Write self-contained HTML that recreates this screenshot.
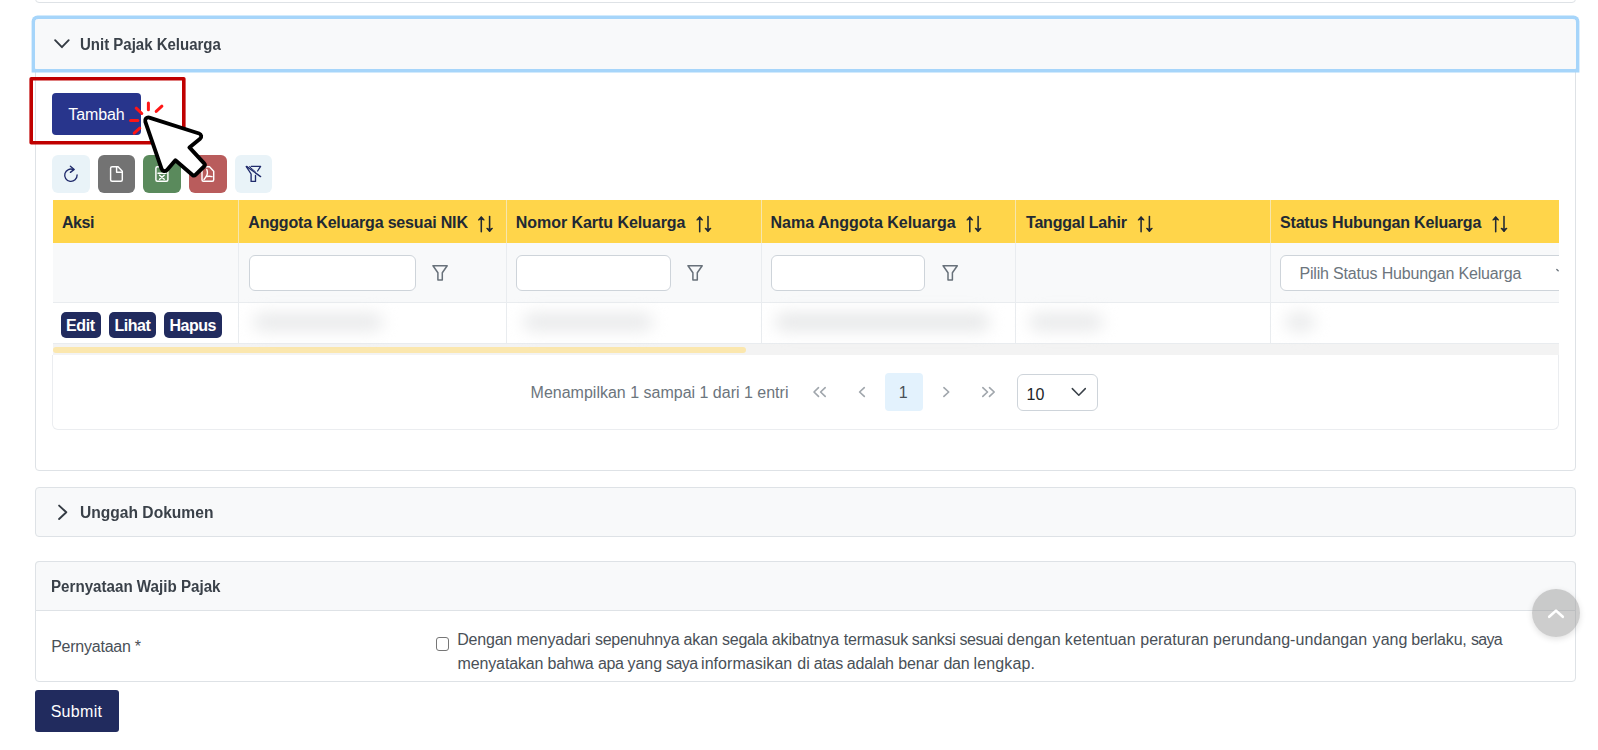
<!DOCTYPE html>
<html lang="id"><head><meta charset="utf-8"><title>Unit Pajak Keluarga</title>
<style>
html,body{margin:0;padding:0;background:#fff;}
body{position:relative;width:1598px;height:750px;overflow:hidden;font-family:"Liberation Sans",sans-serif;}
.b{position:absolute;box-sizing:border-box;}
.t{position:absolute;white-space:nowrap;line-height:normal;font-family:"Liberation Sans",sans-serif;}
svg{position:absolute;overflow:visible;}
.panelhd{background:#f8f9fa;border:1px solid #dee2e6;}
.inp{background:#fff;border:1px solid #ced4da;border-radius:6px;}
.vl{position:absolute;width:1px;}

</style></head>
<body>
<!-- previous panel bottom edge -->
<div class="b" style="left:35px;top:-30px;width:1541px;height:33px;border:1px solid #dee2e6;border-radius:0 0 4px 4px;background:#fff"></div>

<!-- Unit Pajak Keluarga content -->
<div class="b" style="left:35px;top:60px;width:1541px;height:411px;border:1px solid #dee2e6;border-radius:0 0 4px 4px;background:#fff"></div>
<!-- Unit Pajak Keluarga header w/ focus ring -->
<div class="b panelhd" style="left:35px;top:19px;width:1541px;height:50px;border-color:#f8f9fa;border-radius:2.5px 2.5px 0 0;box-shadow:0 0 0 3.4px #a6d5fa"></div>
<svg style="left:54px;top:39px" width="16" height="10" viewBox="0 0 16 10"><path d="M1.1 1.2 L7.9 8.2 L14.7 1.2" fill="none" stroke="#343b43" stroke-width="1.9" stroke-linecap="round" stroke-linejoin="round"/></svg>

<!-- Tambah button -->
<div class="b" style="left:52px;top:93px;width:89px;height:42px;background:#28358c;border-radius:4px"></div>

<!-- toolbar icon buttons -->
<div class="b" style="left:52px;top:155px;width:37.7px;height:37.7px;background:#e9f3f8;border-radius:6px"></div>
<div class="b" style="left:97.7px;top:155px;width:37.7px;height:37.7px;background:#737373;border-radius:6px"></div>
<div class="b" style="left:143.4px;top:155px;width:37.7px;height:37.7px;background:#5a8a5c;border-radius:6px"></div>
<div class="b" style="left:189.1px;top:155px;width:37.7px;height:37.7px;background:#b95c5c;border-radius:6px"></div>
<div class="b" style="left:234.8px;top:155px;width:37.7px;height:37.7px;background:#e9f3f8;border-radius:6px"></div>

<!-- table -->
<div class="b" id="tbl" style="left:53px;top:200px;width:1506px;height:155px;overflow:hidden">
  <div class="b" style="left:0;top:0;width:1506px;height:43px;background:#ffd54a"></div>
  <div class="b" style="left:0;top:43px;width:1506px;height:60px;background:#f8f9fa;border-bottom:1px solid #e9ecef"></div>
  <div class="b" style="left:0;top:103px;width:1506px;height:41px;background:#fff;border-bottom:1px solid #e9ecef"></div>
  <div class="b" style="left:0;top:144.4px;width:1506px;height:10.3px;background:#f3f3f3"></div>
  <div class="b" style="left:0;top:147px;width:693px;height:6px;background:#fbe7ae;border-radius:3px"></div>
  <!-- column dividers -->
  <div class="vl" style="left:185px;top:0;height:43px;background:#f6e6ad"></div>
  <div class="vl" style="left:453px;top:0;height:43px;background:#f6e6ad"></div>
  <div class="vl" style="left:707.6px;top:0;height:43px;background:#f6e6ad"></div>
  <div class="vl" style="left:962.4px;top:0;height:43px;background:#f6e6ad"></div>
  <div class="vl" style="left:1217px;top:0;height:43px;background:#f6e6ad"></div>
  <div class="vl" style="left:185px;top:43px;height:101px;background:#e9ecef"></div>
  <div class="vl" style="left:453px;top:43px;height:101px;background:#e9ecef"></div>
  <div class="vl" style="left:707.6px;top:43px;height:101px;background:#e9ecef"></div>
  <div class="vl" style="left:962.4px;top:43px;height:101px;background:#e9ecef"></div>
  <div class="vl" style="left:1217px;top:43px;height:101px;background:#e9ecef"></div>
  <!-- filter inputs -->
  <div class="b inp" style="left:196.3px;top:55.2px;width:167.2px;height:35.6px"></div>
  <div class="b inp" style="left:463.3px;top:55.2px;width:154.4px;height:35.6px"></div>
  <div class="b inp" style="left:717.6px;top:55.2px;width:154.6px;height:35.6px"></div>
  <div class="b inp" style="left:1227.2px;top:55.2px;width:300px;height:35.6px"></div>
  <!-- action buttons -->
  <div class="b" style="left:8px;top:112.1px;width:39.7px;height:25.7px;background:#212b5e;border-radius:5px"></div>
  <div class="b" style="left:56px;top:112.1px;width:46.7px;height:25.7px;background:#212b5e;border-radius:5px"></div>
  <div class="b" style="left:110.75px;top:112.1px;width:58.2px;height:25.7px;background:#212b5e;border-radius:5px"></div>
  <!-- blurred data -->
  <div class="b" style="left:200px;top:113px;width:130px;height:18px;background:#e9eaeb;border-radius:9px;filter:blur(8px)"></div>
  <div class="b" style="left:470px;top:113px;width:130px;height:18px;background:#e9eaeb;border-radius:9px;filter:blur(8px)"></div>
  <div class="b" style="left:722px;top:113px;width:215px;height:18px;background:#e7e8e9;border-radius:9px;filter:blur(8px)"></div>
  <div class="b" style="left:976px;top:113px;width:74px;height:18px;background:#e9eaeb;border-radius:9px;filter:blur(8px)"></div>
  <div class="b" style="left:1232px;top:113px;width:30px;height:18px;background:#e9eaeb;border-radius:9px;filter:blur(8px)"></div>
</div>

<!-- paginator -->
<div class="b" style="left:52px;top:354.7px;width:1507px;height:75px;border:1px solid #ebedf0;border-top:none;border-radius:0 0 6px 6px;background:#fff"></div>
<div class="b" style="left:885.4px;top:373.2px;width:37.3px;height:37.6px;background:#e3f2fd;border-radius:4px"></div>
<div class="b inp" style="left:1017.3px;top:374px;width:80.6px;height:36.8px"></div>

<!-- Unggah Dokumen -->
<div class="b panelhd" style="left:35px;top:487.4px;width:1541px;height:49.5px;border-radius:4px"></div>

<!-- Pernyataan Wajib Pajak -->
<div class="b" style="left:35px;top:561.2px;width:1541px;height:120.4px;border:1px solid #dee2e6;border-radius:4px;background:#fff"></div>
<div class="b panelhd" style="left:35px;top:561.2px;width:1541px;height:49.6px;border-radius:4px 4px 0 0"></div>
<div class="b" style="left:435.5px;top:637.4px;width:13.2px;height:13.2px;border:1.3px solid #767676;border-radius:3px;background:#fff"></div>

<!-- Submit -->
<div class="b" style="left:35px;top:690px;width:84px;height:42px;background:#212b5e;border-radius:3px"></div>

<!-- scroll to top -->
<div class="b" style="left:1532px;top:589px;width:48px;height:48px;border-radius:50%;background:rgba(150,150,150,0.48);box-shadow:0 2px 6px rgba(0,0,0,0.12)"></div>
<svg style="left:1548px;top:608px" width="16" height="10" viewBox="0 0 16 10"><path d="M1.2 8.8 L8 2.6 L14.8 8.8" fill="none" stroke="#fff" stroke-width="2.6" stroke-linecap="round" stroke-linejoin="round"/></svg>

<!-- Unggah chevron -->
<svg style="left:57px;top:504px" width="12" height="17" viewBox="0 0 12 17"><path d="M2.1 1.6 L9.3 8.3 L2.1 15.0" fill="none" stroke="#343b43" stroke-width="1.9" stroke-linecap="round" stroke-linejoin="round"/></svg>

<!-- toolbar icons -->
<svg style="left:0;top:0" width="300" height="200" viewBox="0 0 300 200">
  <!-- refresh -->
  <g fill="none" stroke="#1f2a6b" stroke-width="1.35" stroke-linecap="round" stroke-linejoin="round">
    <path d="M73.6 169.6 A6.2 6.2 0 1 0 77.1 175"/>
    <path d="M70.4 166.3 L74.2 169.4 L70.4 172.4"/>
  </g>
  <!-- file -->
  <g fill="none" stroke="#ffffff" stroke-width="1.45" stroke-linecap="round" stroke-linejoin="round">
    <path d="M112.1 166.8 H118.1 L122.3 171.2 V179.8 Q122.3 181.3 120.8 181.3 H112.1 Q110.6 181.3 110.6 179.8 V168.3 Q110.6 166.8 112.1 166.8 Z"/>
    <path d="M116.6 167.2 V172.2 H122"/>
  </g>
  <!-- excel -->
  <g fill="none" stroke="#ffffff" stroke-width="1.45" stroke-linecap="round" stroke-linejoin="round">
    <path d="M157.4 166.8 H163.4 L167.9 171.2 V179.8 Q167.9 181.3 166.4 181.3 H157.4 Q155.9 181.3 155.9 179.8 V168.3 Q155.9 166.8 157.4 166.8 Z"/>
    <path d="M159.6 175.2 L164.2 179.2 M164.2 175.2 L159.6 179.2"/>
    <path d="M158 173.3 H166"/>
  </g>
  <!-- pdf -->
  <g fill="none" stroke="#ffffff" stroke-width="1.45" stroke-linecap="round" stroke-linejoin="round">
    <path d="M203.5 166.8 H209.5 L213.7 171.2 V179.8 Q213.7 181.3 212.2 181.3 H203.5 Q202 181.3 202 179.8 V168.3 Q202 166.8 203.5 166.8 Z"/>
    <path d="M206.8 169.5 Q208.3 173.5 206.2 176.4 Q205 178.3 204 179.5 M206.5 176.6 Q209 175.8 212 176.6"/>
  </g>
  <!-- filter slash -->
  <g fill="none" stroke="#1f2a6b" stroke-width="1.35" stroke-linecap="round" stroke-linejoin="round">
    <path d="M251.2 166.4 H260.6 L257.6 171"/>
    <path d="M255.5 175.4 V181.4 H251.1 V174 L246.3 166.6"/>
    <path d="M246.6 166.4 L260.6 176.6"/>
    <path d="M249.4 166.6 L255.4 171.8" stroke-width="1"/>
  </g>
</svg>

<!-- sort icons -->
<svg style="left:0;top:200px" width="1598" height="45" viewBox="0 200 1598 45">
  <g transform="translate(477.8,200)" fill="none" stroke="#212934" stroke-linecap="round" stroke-linejoin="round">
      <path d="M3.5 17.2 V31.7" stroke-width="1.55"/>
      <path d="M0.8 19.9 L3.5 16.9 L6.2 19.9 L3.5 18.7 Z" stroke-width="1.3" fill="#212934"/>
      <path d="M11.8 16.4 V31" stroke-width="1.55"/>
      <path d="M9.1 28.4 L11.8 31.4 L14.5 28.4 L11.8 29.6 Z" stroke-width="1.3" fill="#212934"/>
    </g>
  <g transform="translate(696.2,200)" fill="none" stroke="#212934" stroke-linecap="round" stroke-linejoin="round">
      <path d="M3.5 17.2 V31.7" stroke-width="1.55"/>
      <path d="M0.8 19.9 L3.5 16.9 L6.2 19.9 L3.5 18.7 Z" stroke-width="1.3" fill="#212934"/>
      <path d="M11.8 16.4 V31" stroke-width="1.55"/>
      <path d="M9.1 28.4 L11.8 31.4 L14.5 28.4 L11.8 29.6 Z" stroke-width="1.3" fill="#212934"/>
    </g>
  <g transform="translate(966.3,200)" fill="none" stroke="#212934" stroke-linecap="round" stroke-linejoin="round">
      <path d="M3.5 17.2 V31.7" stroke-width="1.55"/>
      <path d="M0.8 19.9 L3.5 16.9 L6.2 19.9 L3.5 18.7 Z" stroke-width="1.3" fill="#212934"/>
      <path d="M11.8 16.4 V31" stroke-width="1.55"/>
      <path d="M9.1 28.4 L11.8 31.4 L14.5 28.4 L11.8 29.6 Z" stroke-width="1.3" fill="#212934"/>
    </g>
  <g transform="translate(1137.6,200)" fill="none" stroke="#212934" stroke-linecap="round" stroke-linejoin="round">
      <path d="M3.5 17.2 V31.7" stroke-width="1.55"/>
      <path d="M0.8 19.9 L3.5 16.9 L6.2 19.9 L3.5 18.7 Z" stroke-width="1.3" fill="#212934"/>
      <path d="M11.8 16.4 V31" stroke-width="1.55"/>
      <path d="M9.1 28.4 L11.8 31.4 L14.5 28.4 L11.8 29.6 Z" stroke-width="1.3" fill="#212934"/>
    </g>
  <g transform="translate(1492.2,200)" fill="none" stroke="#212934" stroke-linecap="round" stroke-linejoin="round">
      <path d="M3.5 17.2 V31.7" stroke-width="1.55"/>
      <path d="M0.8 19.9 L3.5 16.9 L6.2 19.9 L3.5 18.7 Z" stroke-width="1.3" fill="#212934"/>
      <path d="M11.8 16.4 V31" stroke-width="1.55"/>
      <path d="M9.1 28.4 L11.8 31.4 L14.5 28.4 L11.8 29.6 Z" stroke-width="1.3" fill="#212934"/>
    </g>
</svg>

<!-- filter icons -->
<svg style="left:0;top:250px" width="1000" height="45" viewBox="0 250 1000 45">
  <path transform="translate(431.8,250)" d="M1.2 15.7 H15.4 L10.5 22.8 V30.1 H6.1 V22.8 Z" fill="none" stroke="#68717a" stroke-width="1.5" stroke-linejoin="round"/>
  <path transform="translate(686.8,250)" d="M1.2 15.7 H15.4 L10.5 22.8 V30.1 H6.1 V22.8 Z" fill="none" stroke="#68717a" stroke-width="1.5" stroke-linejoin="round"/>
  <path transform="translate(941.9,250)" d="M1.2 15.7 H15.4 L10.5 22.8 V30.1 H6.1 V22.8 Z" fill="none" stroke="#68717a" stroke-width="1.5" stroke-linejoin="round"/>
</svg>

<!-- paginator icons -->
<svg style="left:0;top:370px" width="1200" height="45" viewBox="0 370 1200 45">
  <g fill="none" stroke="#a0a6ac" stroke-width="1.65" stroke-linecap="round" stroke-linejoin="round">
    <path d="M818.5 387.7 L814 392 L818.5 396.4"/>
    <path d="M825.2 387.7 L820.6 392 L825.2 396.4"/>
    <path d="M864.3 387.7 L859.6 392 L864.3 396.4"/>
    <path d="M943.9 387.7 L948.7 392 L943.9 396.4"/>
    <path d="M982.8 387.7 L987.5 392 L982.8 396.4"/>
    <path d="M989.5 387.7 L994.2 392 L989.5 396.4"/>
  </g>
  <path d="M1072.3 388.6 L1078.8 395.2 L1085.3 388.6" fill="none" stroke="#3a4149" stroke-width="1.5" stroke-linecap="round" stroke-linejoin="round"/>
</svg>
<!-- dropdown chevron sliver at table clip -->
<svg style="left:1555px;top:266px" width="4" height="10" viewBox="0 0 4 10"><path d="M1.8 3.4 L3.2 4.8" fill="none" stroke="#6c757d" stroke-width="1.4" stroke-linecap="round"/></svg>

<div class="t" id="t_unit" style="left:80.17px;top:35.75px;font-size:16px;font-weight:700;color:#3a4149;letter-spacing:0.000px;transform:scaleX(0.9373);transform-origin:0 0">Unit Pajak Keluarga</div>
<div class="t" id="t_tambah" style="left:68.31px;top:105.95px;font-size:16px;font-weight:400;color:#ffffff;letter-spacing:-0.094px">Tambah</div>
<div class="t" id="t_aksi" style="left:62.02px;top:213.90px;font-size:16px;font-weight:700;color:#212934;letter-spacing:-0.459px">Aksi</div>
<div class="t" id="t_h1" style="left:248.27px;top:213.90px;font-size:16px;font-weight:700;color:#212934;letter-spacing:-0.168px">Anggota Keluarga sesuai NIK</div>
<div class="t" id="t_h2" style="left:515.85px;top:213.90px;font-size:16px;font-weight:700;color:#212934;letter-spacing:-0.057px">Nomor Kartu Keluarga</div>
<div class="t" id="t_h3" style="left:770.55px;top:213.90px;font-size:16px;font-weight:700;color:#212934;letter-spacing:-0.007px">Nama Anggota Keluarga</div>
<div class="t" id="t_h4" style="left:1026.12px;top:213.90px;font-size:16px;font-weight:700;color:#212934;letter-spacing:-0.237px">Tanggal Lahir</div>
<div class="t" id="t_h5" style="left:1279.99px;top:213.90px;font-size:16px;font-weight:700;color:#212934;letter-spacing:-0.175px">Status Hubungan Keluarga</div>
<div class="t" id="t_ph" style="left:1299.40px;top:264.80px;font-size:16px;font-weight:400;color:#6c757d;letter-spacing:-0.170px">Pilih Status Hubungan Keluarga</div>
<div class="t" id="t_edit" style="left:66.11px;top:317.00px;font-size:16px;font-weight:700;color:#ffffff;letter-spacing:-0.408px">Edit</div>
<div class="t" id="t_lihat" style="left:114.55px;top:317.00px;font-size:16px;font-weight:700;color:#ffffff;letter-spacing:-0.513px">Lihat</div>
<div class="t" id="t_hapus" style="left:169.55px;top:317.00px;font-size:16px;font-weight:700;color:#ffffff;letter-spacing:-0.510px">Hapus</div>
<div class="t" id="t_show" style="left:530.60px;top:383.90px;font-size:16px;font-weight:400;color:#6c757d;letter-spacing:-0.002px">Menampilkan 1 sampai 1 dari 1 entri</div>
<div class="t" id="t_p1" style="left:898.68px;top:383.90px;font-size:16px;font-weight:400;color:#495057;letter-spacing:0.000px">1</div>
<div class="t" id="t_p10" style="left:1026.50px;top:385.60px;font-size:16px;font-weight:400;color:#212529;letter-spacing:0.000px">10</div>
<div class="t" id="t_unggah" style="left:80.16px;top:503.90px;font-size:16px;font-weight:700;color:#3a4149;letter-spacing:0.000px;transform:scaleX(0.9747);transform-origin:0 0">Unggah Dokumen</div>
<div class="t" id="t_pwp" style="left:51.22px;top:577.90px;font-size:16px;font-weight:700;color:#3a4149;letter-spacing:0.000px;transform:scaleX(0.9466);transform-origin:0 0">Pernyataan Wajib Pajak</div>
<div class="t" id="t_pern" style="left:51.13px;top:637.90px;font-size:16px;font-weight:400;color:#495057;letter-spacing:-0.234px">Pernyataan *</div>
<div class="t" id="t_submit" style="left:50.65px;top:702.60px;font-size:16px;font-weight:400;color:#ffffff;letter-spacing:0.305px">Submit</div>
<div class="t" id="t_l1_0" style="left:457.28px;top:630.80px;font-size:16px;font-weight:400;color:#495057;letter-spacing:-0.214px">Dengan</div>
<div class="t" id="t_l1_1" style="left:516.55px;top:630.80px;font-size:16px;font-weight:400;color:#495057;letter-spacing:-0.075px">menyadari</div>
<div class="t" id="t_l1_2" style="left:595.08px;top:630.80px;font-size:16px;font-weight:400;color:#495057;letter-spacing:-0.303px">sepenuhnya</div>
<div class="t" id="t_l1_3" style="left:683.56px;top:630.80px;font-size:16px;font-weight:400;color:#495057;letter-spacing:-0.090px">akan</div>
<div class="t" id="t_l1_4" style="left:722.08px;top:630.80px;font-size:16px;font-weight:400;color:#495057;letter-spacing:-0.286px">segala</div>
<div class="t" id="t_l1_5" style="left:771.87px;top:630.80px;font-size:16px;font-weight:400;color:#495057;letter-spacing:-0.165px">akibatnya</div>
<div class="t" id="t_l1_6" style="left:843.65px;top:630.80px;font-size:16px;font-weight:400;color:#495057;letter-spacing:-0.172px">termasuk</div>
<div class="t" id="t_l1_7" style="left:911.87px;top:630.80px;font-size:16px;font-weight:400;color:#495057;letter-spacing:-0.287px">sanksi</div>
<div class="t" id="t_l1_8" style="left:959.54px;top:630.80px;font-size:16px;font-weight:400;color:#495057;letter-spacing:-0.485px">sesuai</div>
<div class="t" id="t_l1_9" style="left:1007.07px;top:630.80px;font-size:16px;font-weight:400;color:#495057;letter-spacing:0.037px">dengan</div>
<div class="t" id="t_l1_10" style="left:1064.85px;top:630.80px;font-size:16px;font-weight:400;color:#495057;letter-spacing:0.077px">ketentuan</div>
<div class="t" id="t_l1_11" style="left:1140.24px;top:630.80px;font-size:16px;font-weight:400;color:#495057;letter-spacing:-0.005px">peraturan</div>
<div class="t" id="t_l1_12" style="left:1212.98px;top:630.80px;font-size:16px;font-weight:400;color:#495057;letter-spacing:0.070px">perundang-undangan</div>
<div class="t" id="t_l1_13" style="left:1372.62px;top:630.80px;font-size:16px;font-weight:400;color:#495057;letter-spacing:0.050px">yang</div>
<div class="t" id="t_l1_14" style="left:1411.20px;top:630.80px;font-size:16px;font-weight:400;color:#495057;letter-spacing:-0.186px">berlaku,</div>
<div class="t" id="t_l1_15" style="left:1471.10px;top:630.80px;font-size:16px;font-weight:400;color:#495057;letter-spacing:-0.772px">saya</div>
<div class="t" id="t_l2_0" style="left:457.55px;top:654.50px;font-size:16px;font-weight:400;color:#495057;letter-spacing:-0.138px">menyatakan</div>
<div class="t" id="t_l2_1" style="left:547.56px;top:654.50px;font-size:16px;font-weight:400;color:#495057;letter-spacing:-0.267px">bahwa</div>
<div class="t" id="t_l2_2" style="left:598.02px;top:654.50px;font-size:16px;font-weight:400;color:#495057;letter-spacing:-0.463px">apa</div>
<div class="t" id="t_l2_3" style="left:627.62px;top:654.50px;font-size:16px;font-weight:400;color:#495057;letter-spacing:-0.090px">yang</div>
<div class="t" id="t_l2_4" style="left:665.95px;top:654.50px;font-size:16px;font-weight:400;color:#495057;letter-spacing:-0.529px">saya</div>
<div class="t" id="t_l2_5" style="left:701.09px;top:654.50px;font-size:16px;font-weight:400;color:#495057;letter-spacing:0.042px">informasikan</div>
<div class="t" id="t_l2_6" style="left:797.36px;top:654.50px;font-size:16px;font-weight:400;color:#495057;letter-spacing:-0.100px">di</div>
<div class="t" id="t_l2_7" style="left:813.87px;top:654.50px;font-size:16px;font-weight:400;color:#495057;letter-spacing:-0.300px">atas</div>
<div class="t" id="t_l2_8" style="left:846.82px;top:654.50px;font-size:16px;font-weight:400;color:#495057;letter-spacing:-0.171px">adalah</div>
<div class="t" id="t_l2_9" style="left:898.16px;top:654.50px;font-size:16px;font-weight:400;color:#495057;letter-spacing:-0.045px">benar</div>
<div class="t" id="t_l2_10" style="left:943.40px;top:654.50px;font-size:16px;font-weight:400;color:#495057;letter-spacing:-0.188px">dan</div>
<div class="t" id="t_l2_11" style="left:973.55px;top:654.50px;font-size:16px;font-weight:400;color:#495057;letter-spacing:0.138px">lengkap.</div>
<!-- red highlight + cursor overlay -->
<svg style="left:0;top:0" width="1598" height="750" viewBox="0 0 1598 750">
  <rect x="31.2" y="78.7" width="152.6" height="64" fill="none" stroke="#c00000" stroke-width="3.6" stroke-linejoin="round"/>
  <g stroke="#ff1515" stroke-width="3" stroke-linecap="round" fill="none">
    <path d="M148.4 102.9 V109.8"/>
    <path d="M161.9 106.2 L156.2 111.4"/>
    <path d="M136.2 108.2 L141.8 113.5"/>
    <path d="M130.6 120.4 H137.8"/>
    <path d="M139.8 128.2 L134.2 133.2"/>
  </g>
  <path id="cur" d="M145.28 121.64 A3.2 3.2 0 0 1 149.28 117.55 L199.12 133.51 A3.0 3.0 0 0 1 200.10 138.70 L189.40 147.40 L204.15 163.42 A2.2 2.2 0 0 1 204.05 166.49 L195.44 174.81 A2.2 2.2 0 0 1 192.48 174.90 L175.40 160.30 L167.03 169.99 A3.2 3.2 0 0 1 161.59 168.94 Z" fill="#fff" stroke="#000" stroke-width="3.9" stroke-linejoin="round"/>
</svg>

</body></html>
